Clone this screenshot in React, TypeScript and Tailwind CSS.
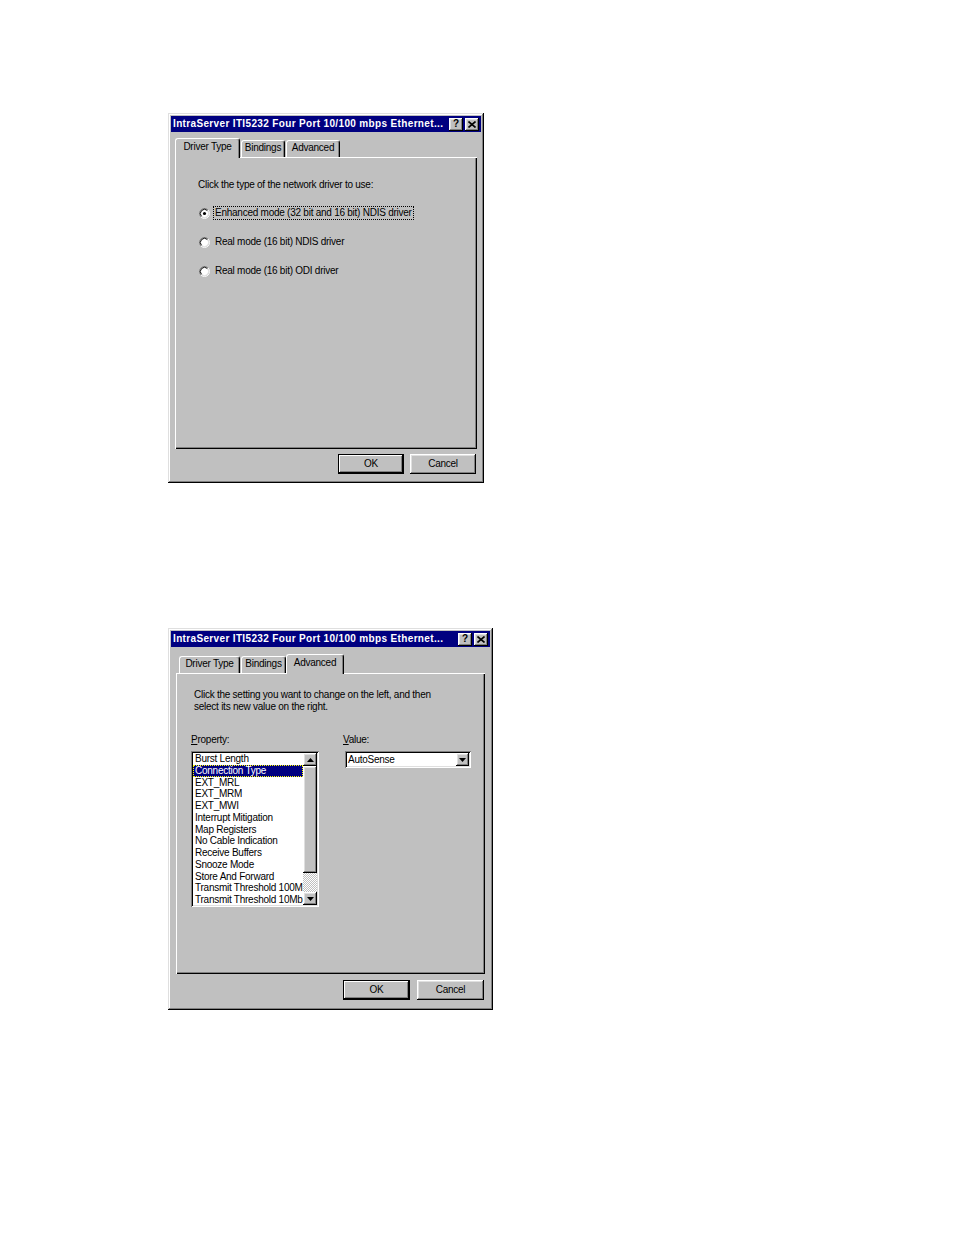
import React from "react";

const raised =
  "shadow-[inset_-1px_-1px_#000,inset_1px_1px_#dfdfdf,inset_-2px_-2px_#808080,inset_2px_2px_#fff]";
const btnRaised =
  "shadow-[inset_-1px_-1px_#000,inset_1px_1px_#fff,inset_-2px_-2px_#808080,inset_2px_2px_#dfdfdf]";
const sunken =
  "shadow-[inset_1px_1px_#808080,inset_-1px_-1px_#fff,inset_2px_2px_#000,inset_-2px_-2px_#dfdfdf]";
const panelEdge = "shadow-[inset_1px_1px_#fff,inset_-1px_-1px_#000,inset_-2px_-2px_#808080]";
const txt = "text-[10px] tracking-[-0.25px]";

function Radio({ checked }: { checked?: boolean }) {
  const arc = (r: number, topLeft: boolean) => {
    const d = r * 0.7071;
    const x1 = 6 - d;
    const y1 = 6 + d;
    const x2 = 6 + d;
    const y2 = 6 - d;
    return topLeft
      ? `M${x1} ${y1}A${r} ${r} 0 0 1 ${x2} ${y2}`
      : `M${x2} ${y2}A${r} ${r} 0 0 1 ${x1} ${y1}`;
  };
  return (
    <svg width="11" height="11" viewBox="0 0 12 12" className="shrink-0">
      <circle cx="6" cy="6" r="4.5" fill="#fff" />
      <path d={arc(5.5, true)} stroke="#808080" fill="none" />
      <path d={arc(5.5, false)} stroke="#fff" fill="none" />
      <path d={arc(4.5, true)} stroke="#000" fill="none" />
      <path d={arc(4.5, false)} stroke="#dfdfdf" fill="none" />
      {checked && <circle cx="6" cy="6" r="1.7" fill="#000" />}
    </svg>
  );
}

function TitleBar() {
  return (
    <div className="flex h-[16px] items-center justify-between bg-[#000080] pl-[2px] pr-[2px]">
      <span className="whitespace-nowrap text-[10px] font-bold leading-none tracking-[0.35px] text-white">
        IntraServer ITI5232 Four Port 10/100 mbps Ethernet...
      </span>
      <div className="flex gap-[2px]">
        <div className={`flex h-[13px] w-[14px] items-center justify-center bg-[#c0c0c0] ${btnRaised}`}>
          <span className="text-[10px] font-bold leading-none text-black">?</span>
        </div>
        <div className={`flex h-[13px] w-[14px] items-center justify-center bg-[#c0c0c0] ${btnRaised}`}>
          <svg width="8" height="7" viewBox="0 0 8 7">
            <path d="M0.5 0.5L7.5 6.5M7.5 0.5L0.5 6.5" stroke="#000" strokeWidth="1.6" />
          </svg>
        </div>
      </div>
    </div>
  );
}

function Tab({ label, active, className = "" }: { label: string; active?: boolean; className?: string }) {
  return (
    <div
      className={`relative flex justify-center rounded-t-[3px] border-l border-t border-r border-white border-r-black bg-[#c0c0c0] shadow-[inset_-1px_0_#808080] ${
        active ? "z-10 -mb-px h-[20px] pt-[2px]" : "h-[17px] pt-[1px]"
      } ${className}`}
    >
      <span className={`whitespace-nowrap leading-[12px] ${txt}`}>{label}</span>
    </div>
  );
}

function Button({ label, isDefault, className = "" }: { label: string; isDefault?: boolean; className?: string }) {
  return (
    <div
      className={`flex h-[20px] items-center justify-center bg-[#c0c0c0] ${
        isDefault ? "border border-black shadow-[inset_-1px_-1px_#000,inset_1px_1px_#fff,inset_-2px_-2px_#808080]" : btnRaised
      } ${className}`}
    >
      <span className={`leading-none ${txt}`}>{label}</span>
    </div>
  );
}

function Arrow({ up }: { up?: boolean }) {
  return (
    <svg width="7" height="4" viewBox="0 0 7 4">
      <path d={up ? "M3.5 0L7 4H0Z" : "M0 0H7L3.5 4Z"} fill="#000" />
    </svg>
  );
}

const properties = [
  "Burst Length",
  "Connection Type",
  "EXT_MRL",
  "EXT_MRM",
  "EXT_MWI",
  "Interrupt Mitigation",
  "Map Registers",
  "No Cable Indication",
  "Receive Buffers",
  "Snooze Mode",
  "Store And Forward",
  "Transmit Threshold 100Mb",
  "Transmit Threshold 10Mb",
];

function DriverTypeDialog() {
  const options = [
    "Enhanced mode (32 bit and 16 bit) NDIS driver",
    "Real mode (16 bit) NDIS driver",
    "Real mode (16 bit) ODI driver",
  ];
  return (
    <div className={`h-[370px] w-[316px] bg-[#c0c0c0] px-[3px] pt-[3px] ${raised}`}>
      <TitleBar />
      <div className="mt-[6px] px-[4px]">
        <div className="flex h-[19px] items-end">
          <Tab label="Driver Type" active className="w-[65px]" />
          <Tab label="Bindings" className="ml-px w-[44px]" />
          <Tab label="Advanced" className="ml-px w-[54px]" />
        </div>
        <div className={`h-[292px] bg-[#c0c0c0] pl-[23px] pt-[22px] ${panelEdge}`}>
          <p className={`leading-[12px] ${txt}`}>Click the type of the network driver to use:</p>
          <div className="mt-[16px] flex flex-col gap-[17px]">
            {options.map((o, i) => (
              <div key={o} className="flex h-[12px] items-center">
                <span className="ml-[1px] mr-[4px] flex">
                  <Radio checked={i === 0} />
                </span>
                <span
                  className={`whitespace-nowrap px-px leading-[12px] ${txt} ${
                    i === 0 ? "outline-1 outline-dotted outline-black" : ""
                  }`}
                >
                  {o}
                </span>
              </div>
            ))}
          </div>
        </div>
      </div>
      <div className="mt-[5px] flex justify-end gap-[6px] pr-[5px]">
        <Button label="OK" isDefault className="w-[66px]" />
        <Button label="Cancel" className="w-[66px]" />
      </div>
    </div>
  );
}

function AdvancedDialog() {
  return (
    <div className={`h-[382px] w-[325px] bg-[#c0c0c0] px-[3px] pt-[3px] ${raised}`}>
      <TitleBar />
      <div className="mt-[7px] px-[5px]">
        <div className="flex h-[19px] items-end pl-[3px]">
          <Tab label="Driver Type" className="w-[61px]" />
          <Tab label="Bindings" className="ml-px w-[45px]" />
          <Tab label="Advanced" active className="w-[58px]" />
        </div>
        <div className={`h-[301px] bg-[#c0c0c0] pl-[15px] pt-[16px] ${panelEdge}`}>
          <p className={`ml-[3px] leading-[12px] ${txt}`}>
            Click the setting you want to change on the left, and then
            <br />
            select its new value on the right.
          </p>
          <div className="mt-[21px] flex gap-[24px]">
            <div className="w-[128px]">
              <p className={`leading-[12px] ${txt}`}>
                <span className="underline">P</span>roperty:
              </p>
              <div className={`mt-[5px] flex h-[156px] bg-white p-[2px] ${sunken}`}>
                <div className="min-w-0 flex-1 overflow-hidden">
                  {properties.map((p, i) => (
                    <div
                      key={p}
                      className={`h-[11.75px] whitespace-nowrap pl-[2px] leading-[11.75px] ${txt} ${
                        i === 1
                          ? "bg-[#000080] text-white outline-1 -outline-offset-1 outline-dotted outline-[#ffff00]"
                          : "text-black"
                      }`}
                    >
                      {p}
                    </div>
                  ))}
                </div>
                <div className="flex w-[14px] shrink-0 flex-col">
                  <div className={`flex h-[13px] items-center justify-center bg-[#c0c0c0] ${btnRaised}`}>
                    <Arrow up />
                  </div>
                  <div className={`h-[107px] bg-[#c0c0c0] ${btnRaised}`} />
                  <div className="flex-1 bg-[repeating-conic-gradient(#c0c0c0_0%_25%,#ffffff_0%_50%)] bg-[length:2px_2px]" />
                  <div className={`flex h-[13px] items-center justify-center bg-[#c0c0c0] ${btnRaised}`}>
                    <Arrow />
                  </div>
                </div>
              </div>
            </div>
            <div>
              <p className={`leading-[12px] ${txt}`}>
                <span className="underline">V</span>alue:
              </p>
              <div className={`ml-[2px] mt-[5px] flex h-[17px] w-[126px] items-center bg-white p-[2px] ${sunken}`}>
                <span className={`flex-1 pl-[1px] leading-none ${txt}`}>AutoSense</span>
                <div className={`flex h-[13px] w-[13px] items-center justify-center bg-[#c0c0c0] ${btnRaised}`}>
                  <Arrow />
                </div>
              </div>
            </div>
          </div>
        </div>
      </div>
      <div className="mt-[6px] flex justify-end gap-[7px] pr-[6px]">
        <Button label="OK" isDefault className="w-[67px]" />
        <Button label="Cancel" className="w-[67px]" />
      </div>
    </div>
  );
}

export default function App() {
  return (
    <div className="min-h-[1235px] bg-white pl-[168px] pt-[113px] font-['Liberation_Sans',Arial,sans-serif] text-black">
      <DriverTypeDialog />
      <div className="mt-[145px]">
        <AdvancedDialog />
      </div>
    </div>
  );
}
